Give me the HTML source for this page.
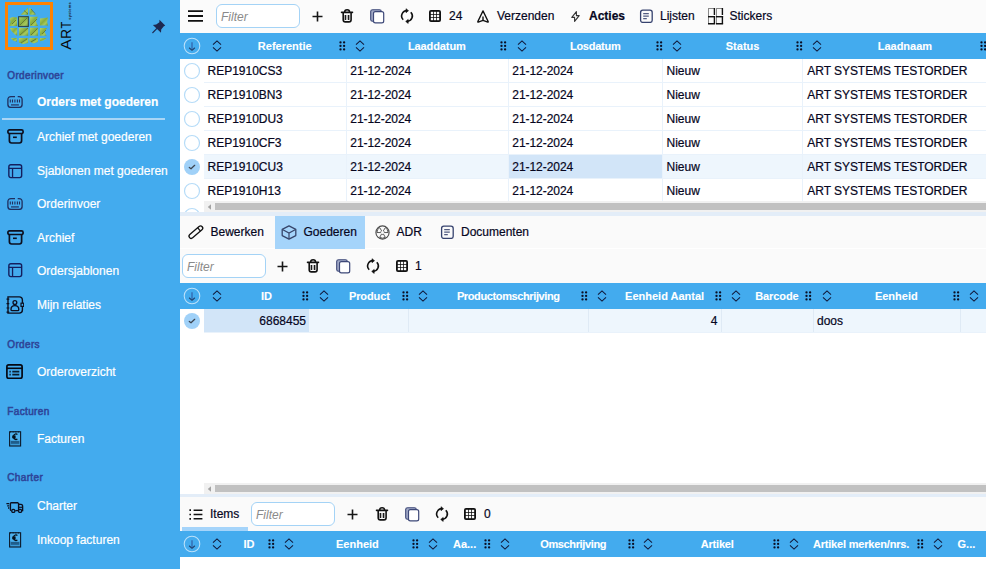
<!DOCTYPE html>
<html><head><meta charset="utf-8"><style>
html,body{margin:0;padding:0;}
body{width:986px;height:569px;overflow:hidden;position:relative;background:#fff;font-family:"Liberation Sans",sans-serif;}
body>div,body>svg{position:absolute;}
div>svg{position:absolute;}
.t{line-height:14px;white-space:nowrap;-webkit-text-stroke:0.2px currentColor;}
</style></head><body>
<div style="left:0;top:0;width:180px;height:569px;background:#43abee"></div>
<div style="left:5px;top:2px;width:48px;height:48px;box-sizing:border-box;border:3px solid #ff8200;"></div>
<svg style="left:0px;top:0px;" width="56" height="52" viewBox="0 0 56 52"><defs><linearGradient id="lg" x1="0" y1="0" x2="1" y2="1"><stop offset="0" stop-color="#b7d56c"/><stop offset="0.45" stop-color="#86ad3f"/><stop offset="0.7" stop-color="#a7c95c"/><stop offset="1" stop-color="#6f9533"/></linearGradient></defs><polygon points="20.6,14.7 28,7.5 28,14.7" fill="url(#lg)"/><polygon points="29.5,7.5 35.8,14.7 29.5,14.7" fill="url(#lg)"/><polygon points="9.6,18.3 12.5,17 17.2,17.6 17.2,26 9.2,26 10.5,22" fill="url(#lg)"/><polygon points="18.1,16.2 28.8,16.2 28.8,26.9 18.1,26.9" fill="url(#lg)"/><polygon points="29.9,16.8 37.9,16.8 36,21.5 37.9,26 29.9,26" fill="url(#lg)"/><polygon points="40,18.6 48,17.6 47.2,22 48,25.6 40,25.6" fill="url(#lg)"/><polygon points="10,28 17.2,28 17.2,35.7 15,34.5 11.5,31" fill="url(#lg)"/><polygon points="18.9,27.7 28.2,27.7 28.2,35.7 18.9,35.7" fill="url(#lg)"/><polygon points="29.9,27.7 37.9,27.7 37.9,35.7 29.9,35.7" fill="url(#lg)"/><polygon points="40,28 47.2,28 44.5,31.5 46.5,35.7 40,35.7" fill="url(#lg)"/><polygon points="10.9,37.9 16.8,37.9 16.8,41.7 13,40.5" fill="url(#lg)"/><polygon points="18.9,37.9 28.2,37.9 28.2,43 23,44.2 18.9,42.5" fill="url(#lg)"/><polygon points="29.5,37.9 37.9,37.9 37.9,42 33.5,43.5 29.5,41.5" fill="url(#lg)"/><polygon points="40,37.9 46.8,37.9 43.5,40.5 40,41.3" fill="url(#lg)"/><path d="M24 10.5L28 14M31 9L35 13.5M20 25L27 18M31 25L37 19M12 24L16 20M20 35L28 28M31 35L37.5 28.5M42 34L46 30M21 43L27 39M31 42L36 39" stroke="#4e6128" stroke-width="0.9" opacity="0.7"/><rect x="18.6" y="16.7" width="9.7" height="9.7" fill="none" stroke="#1d3a5a" stroke-width="1"/></svg>
<svg style="left:56px;top:0px;" width="20" height="54" viewBox="0 0 20 54"><g transform="translate(15,49.8) rotate(-90)" font-family="Liberation Sans" fill="#0a0a0a"><text x="0" y="0" font-size="14" transform="scale(1.12,1)">A</text><text x="10.9" y="0" font-size="14">R</text><text x="0" y="0" font-size="14" transform="translate(21.2,0) scale(0.8,1)">T</text><text x="30" y="-0.2" font-size="4" font-weight="bold" textLength="17.5" lengthAdjust="spacing" fill="#1a1a2a">systems</text></g></svg>
<svg style="left:152px;top:19px;" width="14" height="15" viewBox="0 0 14 15"><path d="M7.4 0.8L13.2 6.6L11.6 7.4L9.2 10.6L9 13.8L0.9 5.9L4.2 5.6L7.4 3.2Z" fill="#1d2850"/><path d="M4.7 9.6L0.8 13.6" stroke="#1d2850" stroke-width="1.3" stroke-linecap="round"/></svg>
<div class="t" style="left:7.3px;top:68.6px;font-size:10px;font-weight:normal;color:#2e4699;letter-spacing:0.35px;-webkit-text-stroke:0.55px currentColor;">Orderinvoer</div>
<div class="t" style="left:7.3px;top:337.6px;font-size:10px;font-weight:normal;color:#2e4699;letter-spacing:0.35px;-webkit-text-stroke:0.55px currentColor;">Orders</div>
<div class="t" style="left:7.3px;top:404.6px;font-size:10px;font-weight:normal;color:#2e4699;letter-spacing:0.35px;-webkit-text-stroke:0.55px currentColor;">Facturen</div>
<div class="t" style="left:7.3px;top:471.4px;font-size:10px;font-weight:normal;color:#2e4699;letter-spacing:0.35px;-webkit-text-stroke:0.55px currentColor;">Charter</div>
<div class="t" style="left:37px;top:94.5px;font-size:12px;font-weight:bold;color:#fff;">Orders met goederen</div>
<svg style="left:7px;top:94.5px;" width="16" height="13" viewBox="0 0 16 13"><path d="M8 1.6H4Q0.9 1.6 0.9 4.6V9.4Q0.9 12.4 4 12.4H12Q15.1 12.4 15.1 9.4V4.6Q15.1 1.6 12 1.6H10.7" fill="none" stroke="#1f2e5e" stroke-width="1.3"/><path d="M3.3 4.4V7.6M5.5 4.4V7.6M7.9 4.4V7.6M10.4 4.4V7.6M12.5 4.4V7.6" stroke="#1f2e5e" stroke-width="1.1"/><path d="M4 9.9H11.9" stroke="#2a4a7e" stroke-width="1.5"/></svg>
<div class="t" style="left:37px;top:130.3px;font-size:12px;font-weight:normal;color:#fff;">Archief met goederen</div>
<svg style="left:6.5px;top:129px;" width="17" height="15" viewBox="0 0 17 15"><rect x="0.9" y="0.9" width="15.2" height="3.6" rx="1.6" fill="none" stroke="#0d1020" stroke-width="1.7"/><path d="M2.4 4.6V11.8Q2.4 14 4.6 14H12.4Q14.6 14 14.6 11.8V4.6" fill="none" stroke="#0d1020" stroke-width="1.7"/><path d="M6 8.3H9.8" stroke="#0d1020" stroke-width="1.6"/></svg>
<div class="t" style="left:37px;top:163.5px;font-size:12px;font-weight:normal;color:#fff;">Sjablonen met goederen</div>
<svg style="left:7.6px;top:163.6px;" width="15" height="15" viewBox="0 0 15 15"><rect x="0.85" y="0.7" width="12.8" height="12.9" rx="2" fill="none" stroke="#141f5e" stroke-width="1.4"/><path d="M0.8 4.3H13.6M4.55 4.3V13.6" stroke="#141f5e" stroke-width="1.3"/></svg>
<div class="t" style="left:37px;top:197.3px;font-size:12px;font-weight:normal;color:#fff;">Orderinvoer</div>
<svg style="left:7px;top:197px;" width="16" height="13" viewBox="0 0 16 13"><path d="M8 1.6H4Q0.9 1.6 0.9 4.6V9.4Q0.9 12.4 4 12.4H12Q15.1 12.4 15.1 9.4V4.6Q15.1 1.6 12 1.6H10.7" fill="none" stroke="#1f2e5e" stroke-width="1.3"/><path d="M3.3 4.4V7.6M5.5 4.4V7.6M7.9 4.4V7.6M10.4 4.4V7.6M12.5 4.4V7.6" stroke="#1f2e5e" stroke-width="1.1"/><path d="M4 9.9H11.9" stroke="#2a4a7e" stroke-width="1.5"/></svg>
<div class="t" style="left:37px;top:230.8px;font-size:12px;font-weight:normal;color:#fff;">Archief</div>
<svg style="left:6.5px;top:230px;" width="17" height="15" viewBox="0 0 17 15"><rect x="0.9" y="0.9" width="15.2" height="3.6" rx="1.6" fill="none" stroke="#0d1020" stroke-width="1.7"/><path d="M2.4 4.6V11.8Q2.4 14 4.6 14H12.4Q14.6 14 14.6 11.8V4.6" fill="none" stroke="#0d1020" stroke-width="1.7"/><path d="M6 8.3H9.8" stroke="#0d1020" stroke-width="1.6"/></svg>
<div class="t" style="left:37px;top:264.3px;font-size:12px;font-weight:normal;color:#fff;">Ordersjablonen</div>
<svg style="left:7.6px;top:263.4px;" width="15" height="15" viewBox="0 0 15 15"><rect x="0.85" y="0.7" width="12.8" height="12.9" rx="2" fill="none" stroke="#141f5e" stroke-width="1.4"/><path d="M0.8 4.3H13.6M4.55 4.3V13.6" stroke="#141f5e" stroke-width="1.3"/></svg>
<div class="t" style="left:37px;top:298px;font-size:12px;font-weight:normal;color:#fff;">Mijn relaties</div>
<svg style="left:6px;top:296px;" width="18" height="18" viewBox="0 0 18 18"><path d="M2 0.9H13.2Q16.4 0.9 16.4 4.1V14Q16.4 17.1 13.2 17.1H2Z" fill="none" stroke="#0b0f20" stroke-width="1.4"/><path d="M0.5 3.2H3.3M0.5 7.6H3.3M0.5 12H3.3M0.5 16.2H3.3" stroke="#0b0f20" stroke-width="1.2"/><circle cx="8.9" cy="6.6" r="1.9" fill="none" stroke="#0b0f20" stroke-width="1.3"/><path d="M5 13.4Q5 9.6 8.9 9.6Q12.8 9.6 12.8 13.4Q12.8 14.6 11.6 14.6H6.2Q5 14.6 5 13.4Z" fill="none" stroke="#0b0f20" stroke-width="1.4"/><rect x="15" y="7.2" width="2.7" height="3.2" fill="#43abee" stroke="#0b0f20" stroke-width="1.2"/></svg>
<div class="t" style="left:37px;top:365.2px;font-size:12px;font-weight:normal;color:#fff;">Orderoverzicht</div>
<svg style="left:6.2px;top:364.2px;" width="17" height="15" viewBox="0 0 17 15"><rect x="0.9" y="0.9" width="15.2" height="13.4" rx="1.8" fill="none" stroke="#050812" stroke-width="1.7"/><path d="M0.9 4.3H16.1" stroke="#050812" stroke-width="1.6"/><path d="M3.4 7.6H4.8M3.4 10.6H4.8M6.3 7.6H13.3M6.3 10.6H13.3" stroke="#0b1e2e" stroke-width="1.7"/></svg>
<div class="t" style="left:37px;top:432px;font-size:12px;font-weight:normal;color:#fff;">Facturen</div>
<svg style="left:8.6px;top:431.2px;" width="13" height="16" viewBox="0 0 13 16"><rect x="0.6" y="0.8" width="11" height="14.2" fill="#3b9ad6" stroke="#0c1a2a" stroke-width="1.1"/><rect x="1.2" y="1.4" width="9.8" height="8" fill="#4cb0ec"/><rect x="1.9" y="10" width="8.4" height="2.8" fill="#1f5d8a"/><path d="M1 0.8H11.2" stroke="#0c1a2a" stroke-width="1.2" stroke-dasharray="1 0.6"/><path d="M8.4 3.4Q7.4 2.6 6.3 3Q4.4 3.8 4.4 5.8Q4.4 7.8 6.3 8.4Q7.4 8.7 8.4 8M3.2 5.2H6.6M3.2 6.5H6.6" fill="none" stroke="#06101a" stroke-width="1.3"/></svg>
<div class="t" style="left:37px;top:498.8px;font-size:12px;font-weight:normal;color:#fff;">Charter</div>
<svg style="left:5.5px;top:501.5px;" width="18" height="11" viewBox="0 0 18 11"><path d="M0.4 1.6H3.2M1.2 3.8H3.2M2 6H3.2" stroke="#0b0f20" stroke-width="1.3"/><path d="M5.4 8.6Q4.4 8.6 4.4 7.6V1.6Q4.4 0.7 5.3 0.7H11.6L12.6 1.5V8.6" fill="none" stroke="#0b0f20" stroke-width="1.4"/><path d="M12.6 2.4H15Q16.6 2.4 16.6 4.4V8.6H15.8" fill="none" stroke="#0b0f20" stroke-width="1.4"/><path d="M9.3 8.6H12.2" stroke="#0b0f20" stroke-width="1.3"/><circle cx="7.3" cy="8.9" r="1.6" fill="#43abee" stroke="#0b0f20" stroke-width="1.3"/><circle cx="14.1" cy="8.9" r="1.6" fill="#43abee" stroke="#0b0f20" stroke-width="1.3"/><path d="M12.6 5.3H16.4" stroke="#0b0f20" stroke-width="1.1"/></svg>
<div class="t" style="left:37px;top:532.8px;font-size:12px;font-weight:normal;color:#fff;">Inkoop facturen</div>
<svg style="left:8.6px;top:532.4px;" width="13" height="16" viewBox="0 0 13 16"><rect x="0.6" y="0.8" width="11" height="14.2" fill="#3b9ad6" stroke="#0c1a2a" stroke-width="1.1"/><rect x="1.2" y="1.4" width="9.8" height="8" fill="#4cb0ec"/><rect x="1.9" y="10" width="8.4" height="2.8" fill="#1f5d8a"/><path d="M1 0.8H11.2" stroke="#0c1a2a" stroke-width="1.2" stroke-dasharray="1 0.6"/><path d="M8.4 3.4Q7.4 2.6 6.3 3Q4.4 3.8 4.4 5.8Q4.4 7.8 6.3 8.4Q7.4 8.7 8.4 8M3.2 5.2H6.6M3.2 6.5H6.6" fill="none" stroke="#06101a" stroke-width="1.3"/></svg>
<div style="left:2px;top:118px;width:163px;height:2px;background:#a9d6f6;"></div>
<div style="left:180px;top:0;width:806px;height:569px;background:#fff"></div>
<div style="left:180px;top:0px;width:806px;height:33px;background:#fbfbfb;"></div>
<svg style="left:188px;top:9.5px;" width="15" height="12" viewBox="0 0 15 12"><path d="M0 1.2H15M0 6H15M0 10.8H15" stroke="#111" stroke-width="1.8"/></svg>
<div style="left:216px;top:4px;width:84px;height:24px;box-sizing:border-box;border:1px solid #a4d3f6;border-radius:6px;background:#fff;"></div>
<div class="t" style="left:221px;top:9.6px;font-size:12px;font-weight:normal;color:#8a8a8a;font-style:italic;-webkit-text-stroke:0">Filter</div>
<svg style="left:311.5px;top:10.5px;" width="11" height="11" viewBox="0 0 11 11"><path d="M5.5 0.5V10.5M0.5 5.5H10.5" stroke="#161616" stroke-width="1.6"/></svg>
<svg style="left:340px;top:8px;" width="14" height="15" viewBox="0 0 14 15"><path d="M1.5 4.35H12.5" stroke="#111" stroke-width="1.6" stroke-linecap="round"/><path d="M4.6 4.3A2.5 2.5 0 0 1 9.6 4.3" fill="none" stroke="#111" stroke-width="1.5"/><path d="M3.2 4.6V11.8Q3.2 13.9 5.3 13.9H9Q11.1 13.9 11.1 11.8V4.6" fill="none" stroke="#111" stroke-width="1.6"/><rect x="5.6" y="7" width="3" height="4.8" fill="#bbb"/><path d="M5.3 6.9V11.9M8.7 6.9V11.9" stroke="#111" stroke-width="1.3"/></svg>
<svg style="left:369.5px;top:8.8px;" width="15" height="15" viewBox="0 0 15 15"><rect x="0.7" y="0.7" width="10.6" height="11.6" rx="1.9" fill="#a3abc8" stroke="#3d4878" stroke-width="1.1"/><rect x="3.5" y="2.6" width="10.2" height="11.2" rx="1.9" fill="#fff" stroke="#3d4878" stroke-width="1.2"/></svg>
<svg style="left:400px;top:8px;" width="15" height="16" viewBox="0 0 15 16"><path d="M7 2.6A5.4 5.4 0 0 0 3.2 11.8" fill="none" stroke="#111" stroke-width="1.6"/><path d="M10.8 4.2A5.4 5.4 0 0 1 7 13.4" fill="none" stroke="#111" stroke-width="1.6"/><path d="M6 0.7L8.5 2.7L6 4.7Z" fill="#111" stroke="#111" stroke-width="0.6" stroke-linejoin="round"/><path d="M8.2 11.4L5.7 13.4L8.2 15.4Z" fill="#111" stroke="#111" stroke-width="0.6" stroke-linejoin="round"/></svg>
<svg style="left:429px;top:10px;" width="12" height="12" viewBox="0 0 12 12"><rect x="0" y="0" width="12" height="12" rx="2" fill="#111"/><rect x="1.80" y="1.80" width="2.3" height="2.3" fill="#fafafa"/><rect x="1.80" y="4.85" width="2.3" height="2.3" fill="#fafafa"/><rect x="1.80" y="7.90" width="2.3" height="2.3" fill="#fafafa"/><rect x="4.85" y="1.80" width="2.3" height="2.3" fill="#fafafa"/><rect x="4.85" y="4.85" width="2.3" height="2.3" fill="#fafafa"/><rect x="4.85" y="7.90" width="2.3" height="2.3" fill="#fafafa"/><rect x="7.90" y="1.80" width="2.3" height="2.3" fill="#fafafa"/><rect x="7.90" y="4.85" width="2.3" height="2.3" fill="#fafafa"/><rect x="7.90" y="7.90" width="2.3" height="2.3" fill="#fafafa"/></svg>
<div class="t" style="left:449px;top:9.4px;font-size:12px;font-weight:normal;color:#06061e;">24</div>
<svg style="left:477px;top:9.5px;" width="12" height="13" viewBox="0 0 12 13"><path d="M6 0.9L11.2 11.6Q11.4 12.2 10.8 12.1L6 10.3L1.2 12.1Q0.6 12.2 0.8 11.6Z" fill="none" stroke="#111" stroke-width="1.3" stroke-linejoin="round"/><path d="M6 6.6V10.4" stroke="#111" stroke-width="1.4"/></svg>
<div class="t" style="left:497px;top:9.4px;font-size:12px;font-weight:normal;color:#06061e;">Verzenden</div>
<svg style="left:570.5px;top:10.5px;" width="9" height="11" viewBox="0 0 9 11"><path d="M5.4 0.6V4.6H8.2L3.6 10.4V6.4H0.8Z" fill="none" stroke="#333" stroke-width="1.1" stroke-linejoin="round"/></svg>
<div class="t" style="left:589px;top:9.3px;font-size:12px;font-weight:bold;color:#06061e;">Acties</div>
<svg style="left:639px;top:9px;" width="14" height="14" viewBox="0 0 14 14"><rect x="1.6" y="1.2" width="11.6" height="12.2" rx="2.2" fill="none" stroke="#36426e" stroke-width="1.3"/><path d="M4.2 4.7H9.8M4.2 7.1H9.8M4.2 9.7H7.8" stroke="#36426e" stroke-width="1.2" opacity="0.85"/></svg>
<div class="t" style="left:660px;top:9.4px;font-size:12px;font-weight:normal;color:#06061e;">Lijsten</div>
<svg style="left:708px;top:8px;" width="16" height="17" viewBox="0 0 16 17"><rect x="0" y="0" width="7" height="1" fill="#8a8a8a"/><rect x="8" y="0" width="7" height="1" fill="#8a8a8a"/><rect x="0" y="0" width="1" height="8" fill="#8a8a8a"/><rect x="8" y="0" width="1" height="8" fill="#8a8a8a"/><rect x="0" y="8" width="1" height="8" fill="#8a8a8a"/><rect x="8" y="8" width="1" height="8" fill="#8a8a8a"/><rect x="5.7" y="0" width="1.4" height="7" fill="#111"/><rect x="13.7" y="0" width="1.4" height="7" fill="#111"/><rect x="5.7" y="8" width="1.4" height="8" fill="#111"/><rect x="13.7" y="8" width="1.4" height="8" fill="#111"/><rect x="0" y="8" width="7.1" height="1.4" fill="#111"/><rect x="8" y="8" width="7.1" height="1.4" fill="#111"/><rect x="0" y="15" width="7.1" height="1.5" fill="#111"/><rect x="8" y="15" width="7.1" height="1.5" fill="#111"/></svg>
<div class="t" style="left:729.5px;top:9.4px;font-size:12px;font-weight:normal;color:#06061e;">Stickers</div>
<div style="left:180px;top:33px;width:806px;height:26px;background:#43abee;"></div>
<svg style="left:183px;top:36.8px;" width="18" height="18" viewBox="0 0 18 18"><circle cx="9" cy="9" r="7.8" fill="none" stroke="#d8eefd" stroke-width="1.05" opacity="0.8"/><path d="M9 5.3V12.6" stroke="#3466ad" stroke-width="1.3"/><path d="M6.4 11L9 13.3L11.6 11" fill="none" stroke="#22406e" stroke-width="1.1" stroke-linecap="round" stroke-linejoin="round"/></svg>
<svg style="left:212.0px;top:40.4px;" width="10" height="12" viewBox="0 0 10 12"><path d="M1 4.7L5 0.9L9 4.7M1 7.3L5 11.1L9 7.3" fill="none" stroke="#10183a" stroke-width="1.05" stroke-linejoin="miter"/></svg>
<svg style="left:355.0px;top:40.4px;" width="10" height="12" viewBox="0 0 10 12"><path d="M1 4.7L5 0.9L9 4.7M1 7.3L5 11.1L9 7.3" fill="none" stroke="#10183a" stroke-width="1.05" stroke-linejoin="miter"/></svg>
<svg style="left:517.1px;top:40.4px;" width="10" height="12" viewBox="0 0 10 12"><path d="M1 4.7L5 0.9L9 4.7M1 7.3L5 11.1L9 7.3" fill="none" stroke="#10183a" stroke-width="1.05" stroke-linejoin="miter"/></svg>
<svg style="left:671.9px;top:40.4px;" width="10" height="12" viewBox="0 0 10 12"><path d="M1 4.7L5 0.9L9 4.7M1 7.3L5 11.1L9 7.3" fill="none" stroke="#10183a" stroke-width="1.05" stroke-linejoin="miter"/></svg>
<svg style="left:811.8px;top:40.4px;" width="10" height="12" viewBox="0 0 10 12"><path d="M1 4.7L5 0.9L9 4.7M1 7.3L5 11.1L9 7.3" fill="none" stroke="#10183a" stroke-width="1.05" stroke-linejoin="miter"/></svg>
<svg style="left:339.1px;top:41px;" width="7" height="10" viewBox="0 0 7 10"><circle cx="1.50" cy="1.40" r="1.15" fill="#0b0f24"/><circle cx="1.50" cy="4.90" r="1.15" fill="#0b0f24"/><circle cx="1.50" cy="8.40" r="1.15" fill="#0b0f24"/><circle cx="5.10" cy="1.40" r="1.15" fill="#0b0f24"/><circle cx="5.10" cy="4.90" r="1.15" fill="#0b0f24"/><circle cx="5.10" cy="8.40" r="1.15" fill="#0b0f24"/></svg>
<svg style="left:500.4px;top:41px;" width="7" height="10" viewBox="0 0 7 10"><circle cx="1.50" cy="1.40" r="1.15" fill="#0b0f24"/><circle cx="1.50" cy="4.90" r="1.15" fill="#0b0f24"/><circle cx="1.50" cy="8.40" r="1.15" fill="#0b0f24"/><circle cx="5.10" cy="1.40" r="1.15" fill="#0b0f24"/><circle cx="5.10" cy="4.90" r="1.15" fill="#0b0f24"/><circle cx="5.10" cy="8.40" r="1.15" fill="#0b0f24"/></svg>
<svg style="left:655.8px;top:41px;" width="7" height="10" viewBox="0 0 7 10"><circle cx="1.50" cy="1.40" r="1.15" fill="#0b0f24"/><circle cx="1.50" cy="4.90" r="1.15" fill="#0b0f24"/><circle cx="1.50" cy="8.40" r="1.15" fill="#0b0f24"/><circle cx="5.10" cy="1.40" r="1.15" fill="#0b0f24"/><circle cx="5.10" cy="4.90" r="1.15" fill="#0b0f24"/><circle cx="5.10" cy="8.40" r="1.15" fill="#0b0f24"/></svg>
<svg style="left:795.6px;top:41px;" width="7" height="10" viewBox="0 0 7 10"><circle cx="1.50" cy="1.40" r="1.15" fill="#0b0f24"/><circle cx="1.50" cy="4.90" r="1.15" fill="#0b0f24"/><circle cx="1.50" cy="8.40" r="1.15" fill="#0b0f24"/><circle cx="5.10" cy="1.40" r="1.15" fill="#0b0f24"/><circle cx="5.10" cy="4.90" r="1.15" fill="#0b0f24"/><circle cx="5.10" cy="8.40" r="1.15" fill="#0b0f24"/></svg>
<svg style="left:980.2px;top:41px;" width="7" height="10" viewBox="0 0 7 10"><circle cx="1.50" cy="1.40" r="1.15" fill="#0b0f24"/><circle cx="1.50" cy="4.90" r="1.15" fill="#0b0f24"/><circle cx="1.50" cy="8.40" r="1.15" fill="#0b0f24"/><circle cx="5.10" cy="1.40" r="1.15" fill="#0b0f24"/><circle cx="5.10" cy="4.90" r="1.15" fill="#0b0f24"/><circle cx="5.10" cy="8.40" r="1.15" fill="#0b0f24"/></svg>
<div class="t" style="left:134.75px;width:300px;text-align:center;top:39px;font-size:11px;font-weight:bold;color:#fff;letter-spacing:0px;-webkit-text-stroke:0.1px currentColor">Referentie</div>
<div class="t" style="left:286.8px;width:300px;text-align:center;top:39px;font-size:11px;font-weight:bold;color:#fff;letter-spacing:-0.1px;-webkit-text-stroke:0.1px currentColor">Laaddatum</div>
<div class="t" style="left:445.20000000000005px;width:300px;text-align:center;top:39px;font-size:11px;font-weight:bold;color:#fff;letter-spacing:-0.25px;-webkit-text-stroke:0.1px currentColor">Losdatum</div>
<div class="t" style="left:592.6px;width:300px;text-align:center;top:39px;font-size:11px;font-weight:bold;color:#fff;letter-spacing:0px;-webkit-text-stroke:0.1px currentColor">Status</div>
<div class="t" style="left:754.9px;width:300px;text-align:center;top:39px;font-size:11px;font-weight:bold;color:#fff;letter-spacing:0px;-webkit-text-stroke:0.1px currentColor">Laadnaam</div>
<div style="left:204px;top:82px;width:782px;height:1px;background:#e9f2fb;"></div>
<svg style="left:183px;top:62px;" width="18" height="18" viewBox="0 0 18 18"><circle cx="9" cy="9" r="7.5" fill="#fff" stroke="#b6dcf8" stroke-width="1.2"/></svg>
<div class="t" style="left:207.5px;top:64px;font-size:12px;font-weight:normal;color:#06061e;">REP1910CS3</div>
<div class="t" style="left:350.3px;top:64px;font-size:12px;font-weight:normal;color:#06061e;letter-spacing:-0.05px">21-12-2024</div>
<div class="t" style="left:512.3px;top:64px;font-size:12px;font-weight:normal;color:#06061e;letter-spacing:-0.05px">21-12-2024</div>
<div class="t" style="left:666.5px;top:64px;font-size:12px;font-weight:normal;color:#06061e;">Nieuw</div>
<div class="t" style="left:807.3px;top:64px;font-size:12px;font-weight:normal;color:#06061e;letter-spacing:-0.05px">ART SYSTEMS TESTORDER</div>
<div style="left:204px;top:106px;width:782px;height:1px;background:#e9f2fb;"></div>
<svg style="left:183px;top:86px;" width="18" height="18" viewBox="0 0 18 18"><circle cx="9" cy="9" r="7.5" fill="#fff" stroke="#b6dcf8" stroke-width="1.2"/></svg>
<div class="t" style="left:207.5px;top:88px;font-size:12px;font-weight:normal;color:#06061e;">REP1910BN3</div>
<div class="t" style="left:350.3px;top:88px;font-size:12px;font-weight:normal;color:#06061e;letter-spacing:-0.05px">21-12-2024</div>
<div class="t" style="left:512.3px;top:88px;font-size:12px;font-weight:normal;color:#06061e;letter-spacing:-0.05px">21-12-2024</div>
<div class="t" style="left:666.5px;top:88px;font-size:12px;font-weight:normal;color:#06061e;">Nieuw</div>
<div class="t" style="left:807.3px;top:88px;font-size:12px;font-weight:normal;color:#06061e;letter-spacing:-0.05px">ART SYSTEMS TESTORDER</div>
<div style="left:204px;top:130px;width:782px;height:1px;background:#e9f2fb;"></div>
<svg style="left:183px;top:110px;" width="18" height="18" viewBox="0 0 18 18"><circle cx="9" cy="9" r="7.5" fill="#fff" stroke="#b6dcf8" stroke-width="1.2"/></svg>
<div class="t" style="left:207.5px;top:112px;font-size:12px;font-weight:normal;color:#06061e;">REP1910DU3</div>
<div class="t" style="left:350.3px;top:112px;font-size:12px;font-weight:normal;color:#06061e;letter-spacing:-0.05px">21-12-2024</div>
<div class="t" style="left:512.3px;top:112px;font-size:12px;font-weight:normal;color:#06061e;letter-spacing:-0.05px">21-12-2024</div>
<div class="t" style="left:666.5px;top:112px;font-size:12px;font-weight:normal;color:#06061e;">Nieuw</div>
<div class="t" style="left:807.3px;top:112px;font-size:12px;font-weight:normal;color:#06061e;letter-spacing:-0.05px">ART SYSTEMS TESTORDER</div>
<div style="left:204px;top:154px;width:782px;height:1px;background:#e9f2fb;"></div>
<svg style="left:183px;top:134px;" width="18" height="18" viewBox="0 0 18 18"><circle cx="9" cy="9" r="7.5" fill="#fff" stroke="#b6dcf8" stroke-width="1.2"/></svg>
<div class="t" style="left:207.5px;top:136px;font-size:12px;font-weight:normal;color:#06061e;">REP1910CF3</div>
<div class="t" style="left:350.3px;top:136px;font-size:12px;font-weight:normal;color:#06061e;letter-spacing:-0.05px">21-12-2024</div>
<div class="t" style="left:512.3px;top:136px;font-size:12px;font-weight:normal;color:#06061e;letter-spacing:-0.05px">21-12-2024</div>
<div class="t" style="left:666.5px;top:136px;font-size:12px;font-weight:normal;color:#06061e;">Nieuw</div>
<div class="t" style="left:807.3px;top:136px;font-size:12px;font-weight:normal;color:#06061e;letter-spacing:-0.05px">ART SYSTEMS TESTORDER</div>
<div style="left:204px;top:155px;width:782px;height:23px;background:#eef6fd;"></div>
<div style="left:508px;top:155px;width:154px;height:23px;background:#d2e5f8;"></div>
<div style="left:204px;top:178px;width:782px;height:1px;background:#e9f2fb;"></div>
<svg style="left:183px;top:158px;" width="18" height="18" viewBox="0 0 18 18"><circle cx="9" cy="9" r="8" fill="#a0d1f8"/><path d="M6.3 9.5L8 10.8L11.7 7.3" fill="none" stroke="#3c4450" stroke-width="1.25" stroke-linecap="round" stroke-linejoin="round"/></svg>
<div class="t" style="left:207.5px;top:160px;font-size:12px;font-weight:normal;color:#06061e;">REP1910CU3</div>
<div class="t" style="left:350.3px;top:160px;font-size:12px;font-weight:normal;color:#06061e;letter-spacing:-0.05px">21-12-2024</div>
<div class="t" style="left:512.3px;top:160px;font-size:12px;font-weight:normal;color:#06061e;letter-spacing:-0.05px">21-12-2024</div>
<div class="t" style="left:666.5px;top:160px;font-size:12px;font-weight:normal;color:#06061e;">Nieuw</div>
<div class="t" style="left:807.3px;top:160px;font-size:12px;font-weight:normal;color:#06061e;letter-spacing:-0.05px">ART SYSTEMS TESTORDER</div>
<div style="left:204px;top:202px;width:782px;height:1px;background:#e9f2fb;"></div>
<svg style="left:183px;top:182px;" width="18" height="18" viewBox="0 0 18 18"><circle cx="9" cy="9" r="7.5" fill="#fff" stroke="#b6dcf8" stroke-width="1.2"/></svg>
<div class="t" style="left:207.5px;top:184px;font-size:12px;font-weight:normal;color:#06061e;">REP1910H13</div>
<div class="t" style="left:350.3px;top:184px;font-size:12px;font-weight:normal;color:#06061e;letter-spacing:-0.05px">21-12-2024</div>
<div class="t" style="left:512.3px;top:184px;font-size:12px;font-weight:normal;color:#06061e;letter-spacing:-0.05px">21-12-2024</div>
<div class="t" style="left:666.5px;top:184px;font-size:12px;font-weight:normal;color:#06061e;">Nieuw</div>
<div class="t" style="left:807.3px;top:184px;font-size:12px;font-weight:normal;color:#06061e;letter-spacing:-0.05px">ART SYSTEMS TESTORDER</div>
<div style="left:346px;top:59px;width:1px;height:143px;background:#e9f2fb;"></div>
<div style="left:508px;top:59px;width:1px;height:143px;background:#e9f2fb;"></div>
<div style="left:662px;top:59px;width:1px;height:143px;background:#e9f2fb;"></div>
<div style="left:802px;top:59px;width:1px;height:143px;background:#e9f2fb;"></div>
<div style="left:180px;top:203px;width:24px;height:9px;overflow:hidden"><svg style="left:3px;top:4px" width="18" height="18" viewBox="0 0 18 18"><circle cx="9" cy="9" r="7.5" fill="#fff" stroke="#b6dcf8" stroke-width="1.2"/></svg></div>
<div style="left:204px;top:201px;width:782px;height:11px;background:#f1f1f1;"></div>
<svg style="left:207px;top:204px;" width="5" height="6" viewBox="0 0 5 6"><path d="M4 0.2L0.8 3L4 5.8Z" fill="#a3a3a3"/></svg>
<div style="left:215px;top:203px;width:771px;height:7px;background:#c1c1c1;"></div>
<div style="left:180px;top:212px;width:806px;height:4px;background:#e3edf8;"></div>
<div style="left:180px;top:216px;width:806px;height:32px;background:#fafafa;"></div>
<div style="left:275px;top:216px;width:90px;height:32.6px;background:#a5d4fa;"></div>
<svg style="left:186px;top:222px;" width="20" height="20" viewBox="0 0 20 20"><g transform="translate(9.9,10.15) rotate(-40.8)"><path d="M-8.3 0Q-8.3 -2.2 -6.2 -2.2H6.1A2.2 2.2 0 0 1 6.1 2.2H-6.2Q-8.3 2.2 -8.3 0Z" fill="none" stroke="#111" stroke-width="1.3" stroke-linejoin="round"/><path d="M4.2 -2.2V2.2" stroke="#111" stroke-width="1.2"/></g></svg>
<div class="t" style="left:210.5px;top:225.3px;font-size:12px;font-weight:normal;color:#06061e;">Bewerken</div>
<svg style="left:281px;top:225px;" width="16" height="15" viewBox="0 0 16 15"><path d="M8 0.9L14.8 4.4V10.6L8 14.1L1.2 10.6V4.4Z" fill="none" stroke="#37456a" stroke-width="1.3" stroke-linejoin="round"/><path d="M1.4 4.5L8 8L14.6 4.5M8 8V14" fill="none" stroke="#37456a" stroke-width="1.2"/></svg>
<div class="t" style="left:303.5px;top:225.3px;font-size:12px;font-weight:normal;color:#06061e;">Goederen</div>
<svg style="left:374.7px;top:225px;" width="15" height="15" viewBox="0 0 15 15"><circle cx="7.5" cy="7.5" r="6.6" fill="none" stroke="#4a4a4a" stroke-width="1.1"/><path d="M8.51 9.11L10.30 12.35A5.6 5.6 0 0 1 4.70 12.35L6.49 9.11A1.9 1.9 0 0 0 8.51 9.11Z" fill="none" stroke="#4a4a4a" stroke-width="0.9" stroke-linejoin="round"/><path d="M5.60 7.57L1.90 7.50A5.6 5.6 0 0 1 4.70 2.65L6.61 5.82A1.9 1.9 0 0 0 5.60 7.57Z" fill="none" stroke="#4a4a4a" stroke-width="0.9" stroke-linejoin="round"/><path d="M8.39 5.82L10.30 2.65A5.6 5.6 0 0 1 13.10 7.50L9.40 7.57A1.9 1.9 0 0 0 8.39 5.82Z" fill="none" stroke="#4a4a4a" stroke-width="0.9" stroke-linejoin="round"/></svg>
<div class="t" style="left:396.5px;top:225.3px;font-size:12px;font-weight:normal;color:#06061e;">ADR</div>
<svg style="left:440px;top:225.3px;" width="14" height="14" viewBox="0 0 14 14"><rect x="1.6" y="1.2" width="11.6" height="12.2" rx="2.2" fill="none" stroke="#36426e" stroke-width="1.3"/><path d="M4.2 4.7H9.8M4.2 7.1H9.8M4.2 9.7H7.8" stroke="#36426e" stroke-width="1.2" opacity="0.85"/></svg>
<div class="t" style="left:461px;top:225.3px;font-size:12px;font-weight:normal;color:#06061e;">Documenten</div>
<div style="left:180px;top:248.6px;width:806px;height:34.4px;background:#fafafa;"></div>
<div style="left:182px;top:254px;width:84px;height:24px;box-sizing:border-box;border:1px solid #a4d3f6;border-radius:6px;background:#fff;"></div>
<div class="t" style="left:187px;top:259.6px;font-size:12px;font-weight:normal;color:#8a8a8a;font-style:italic;-webkit-text-stroke:0">Filter</div>
<svg style="left:277px;top:260.5px;" width="11" height="11" viewBox="0 0 11 11"><path d="M5.5 0.5V10.5M0.5 5.5H10.5" stroke="#161616" stroke-width="1.6"/></svg>
<svg style="left:306px;top:258px;" width="14" height="15" viewBox="0 0 14 15"><path d="M1.5 4.35H12.5" stroke="#111" stroke-width="1.6" stroke-linecap="round"/><path d="M4.6 4.3A2.5 2.5 0 0 1 9.6 4.3" fill="none" stroke="#111" stroke-width="1.5"/><path d="M3.2 4.6V11.8Q3.2 13.9 5.3 13.9H9Q11.1 13.9 11.1 11.8V4.6" fill="none" stroke="#111" stroke-width="1.6"/><rect x="5.6" y="7" width="3" height="4.8" fill="#bbb"/><path d="M5.3 6.9V11.9M8.7 6.9V11.9" stroke="#111" stroke-width="1.3"/></svg>
<svg style="left:335.5px;top:258.8px;" width="15" height="15" viewBox="0 0 15 15"><rect x="0.7" y="0.7" width="10.6" height="11.6" rx="1.9" fill="#a3abc8" stroke="#3d4878" stroke-width="1.1"/><rect x="3.5" y="2.6" width="10.2" height="11.2" rx="1.9" fill="#fff" stroke="#3d4878" stroke-width="1.2"/></svg>
<svg style="left:365.5px;top:258px;" width="15" height="16" viewBox="0 0 15 16"><path d="M7 2.6A5.4 5.4 0 0 0 3.2 11.8" fill="none" stroke="#111" stroke-width="1.6"/><path d="M10.8 4.2A5.4 5.4 0 0 1 7 13.4" fill="none" stroke="#111" stroke-width="1.6"/><path d="M6 0.7L8.5 2.7L6 4.7Z" fill="#111" stroke="#111" stroke-width="0.6" stroke-linejoin="round"/><path d="M8.2 11.4L5.7 13.4L8.2 15.4Z" fill="#111" stroke="#111" stroke-width="0.6" stroke-linejoin="round"/></svg>
<svg style="left:395.5px;top:260px;" width="12" height="12" viewBox="0 0 12 12"><rect x="0" y="0" width="12" height="12" rx="2" fill="#111"/><rect x="1.80" y="1.80" width="2.3" height="2.3" fill="#fafafa"/><rect x="1.80" y="4.85" width="2.3" height="2.3" fill="#fafafa"/><rect x="1.80" y="7.90" width="2.3" height="2.3" fill="#fafafa"/><rect x="4.85" y="1.80" width="2.3" height="2.3" fill="#fafafa"/><rect x="4.85" y="4.85" width="2.3" height="2.3" fill="#fafafa"/><rect x="4.85" y="7.90" width="2.3" height="2.3" fill="#fafafa"/><rect x="7.90" y="1.80" width="2.3" height="2.3" fill="#fafafa"/><rect x="7.90" y="4.85" width="2.3" height="2.3" fill="#fafafa"/><rect x="7.90" y="7.90" width="2.3" height="2.3" fill="#fafafa"/></svg>
<div class="t" style="left:415px;top:259.4px;font-size:12px;font-weight:normal;color:#06061e;">1</div>
<div style="left:180px;top:283px;width:806px;height:26px;background:#43abee;"></div>
<svg style="left:183px;top:286.8px;" width="18" height="18" viewBox="0 0 18 18"><circle cx="9" cy="9" r="7.8" fill="none" stroke="#d8eefd" stroke-width="1.05" opacity="0.8"/><path d="M9 5.3V12.6" stroke="#3466ad" stroke-width="1.3"/><path d="M6.4 11L9 13.3L11.6 11" fill="none" stroke="#22406e" stroke-width="1.1" stroke-linecap="round" stroke-linejoin="round"/></svg>
<svg style="left:211.9px;top:290.4px;" width="10" height="12" viewBox="0 0 10 12"><path d="M1 4.7L5 0.9L9 4.7M1 7.3L5 11.1L9 7.3" fill="none" stroke="#10183a" stroke-width="1.05" stroke-linejoin="miter"/></svg>
<svg style="left:318.7px;top:290.4px;" width="10" height="12" viewBox="0 0 10 12"><path d="M1 4.7L5 0.9L9 4.7M1 7.3L5 11.1L9 7.3" fill="none" stroke="#10183a" stroke-width="1.05" stroke-linejoin="miter"/></svg>
<svg style="left:418.2px;top:290.4px;" width="10" height="12" viewBox="0 0 10 12"><path d="M1 4.7L5 0.9L9 4.7M1 7.3L5 11.1L9 7.3" fill="none" stroke="#10183a" stroke-width="1.05" stroke-linejoin="miter"/></svg>
<svg style="left:597.0px;top:290.4px;" width="10" height="12" viewBox="0 0 10 12"><path d="M1 4.7L5 0.9L9 4.7M1 7.3L5 11.1L9 7.3" fill="none" stroke="#10183a" stroke-width="1.05" stroke-linejoin="miter"/></svg>
<svg style="left:730.5px;top:290.4px;" width="10" height="12" viewBox="0 0 10 12"><path d="M1 4.7L5 0.9L9 4.7M1 7.3L5 11.1L9 7.3" fill="none" stroke="#10183a" stroke-width="1.05" stroke-linejoin="miter"/></svg>
<svg style="left:822.3px;top:290.4px;" width="10" height="12" viewBox="0 0 10 12"><path d="M1 4.7L5 0.9L9 4.7M1 7.3L5 11.1L9 7.3" fill="none" stroke="#10183a" stroke-width="1.05" stroke-linejoin="miter"/></svg>
<svg style="left:969.2px;top:290.4px;" width="10" height="12" viewBox="0 0 10 12"><path d="M1 4.7L5 0.9L9 4.7M1 7.3L5 11.1L9 7.3" fill="none" stroke="#10183a" stroke-width="1.05" stroke-linejoin="miter"/></svg>
<svg style="left:302.4px;top:291px;" width="7" height="10" viewBox="0 0 7 10"><circle cx="1.50" cy="1.40" r="1.15" fill="#0b0f24"/><circle cx="1.50" cy="4.90" r="1.15" fill="#0b0f24"/><circle cx="1.50" cy="8.40" r="1.15" fill="#0b0f24"/><circle cx="5.10" cy="1.40" r="1.15" fill="#0b0f24"/><circle cx="5.10" cy="4.90" r="1.15" fill="#0b0f24"/><circle cx="5.10" cy="8.40" r="1.15" fill="#0b0f24"/></svg>
<svg style="left:402.2px;top:291px;" width="7" height="10" viewBox="0 0 7 10"><circle cx="1.50" cy="1.40" r="1.15" fill="#0b0f24"/><circle cx="1.50" cy="4.90" r="1.15" fill="#0b0f24"/><circle cx="1.50" cy="8.40" r="1.15" fill="#0b0f24"/><circle cx="5.10" cy="1.40" r="1.15" fill="#0b0f24"/><circle cx="5.10" cy="4.90" r="1.15" fill="#0b0f24"/><circle cx="5.10" cy="8.40" r="1.15" fill="#0b0f24"/></svg>
<svg style="left:581.2px;top:291px;" width="7" height="10" viewBox="0 0 7 10"><circle cx="1.50" cy="1.40" r="1.15" fill="#0b0f24"/><circle cx="1.50" cy="4.90" r="1.15" fill="#0b0f24"/><circle cx="1.50" cy="8.40" r="1.15" fill="#0b0f24"/><circle cx="5.10" cy="1.40" r="1.15" fill="#0b0f24"/><circle cx="5.10" cy="4.90" r="1.15" fill="#0b0f24"/><circle cx="5.10" cy="8.40" r="1.15" fill="#0b0f24"/></svg>
<svg style="left:714.6px;top:291px;" width="7" height="10" viewBox="0 0 7 10"><circle cx="1.50" cy="1.40" r="1.15" fill="#0b0f24"/><circle cx="1.50" cy="4.90" r="1.15" fill="#0b0f24"/><circle cx="1.50" cy="8.40" r="1.15" fill="#0b0f24"/><circle cx="5.10" cy="1.40" r="1.15" fill="#0b0f24"/><circle cx="5.10" cy="4.90" r="1.15" fill="#0b0f24"/><circle cx="5.10" cy="8.40" r="1.15" fill="#0b0f24"/></svg>
<svg style="left:805.2px;top:291px;" width="7" height="10" viewBox="0 0 7 10"><circle cx="1.50" cy="1.40" r="1.15" fill="#0b0f24"/><circle cx="1.50" cy="4.90" r="1.15" fill="#0b0f24"/><circle cx="1.50" cy="8.40" r="1.15" fill="#0b0f24"/><circle cx="5.10" cy="1.40" r="1.15" fill="#0b0f24"/><circle cx="5.10" cy="4.90" r="1.15" fill="#0b0f24"/><circle cx="5.10" cy="8.40" r="1.15" fill="#0b0f24"/></svg>
<svg style="left:953.4px;top:291px;" width="7" height="10" viewBox="0 0 7 10"><circle cx="1.50" cy="1.40" r="1.15" fill="#0b0f24"/><circle cx="1.50" cy="4.90" r="1.15" fill="#0b0f24"/><circle cx="1.50" cy="8.40" r="1.15" fill="#0b0f24"/><circle cx="5.10" cy="1.40" r="1.15" fill="#0b0f24"/><circle cx="5.10" cy="4.90" r="1.15" fill="#0b0f24"/><circle cx="5.10" cy="8.40" r="1.15" fill="#0b0f24"/></svg>
<div class="t" style="left:116.39999999999998px;width:300px;text-align:center;top:289px;font-size:11px;font-weight:bold;color:#fff;letter-spacing:0px;-webkit-text-stroke:0.1px currentColor">ID</div>
<div class="t" style="left:219.39999999999998px;width:300px;text-align:center;top:289px;font-size:11px;font-weight:bold;color:#fff;letter-spacing:-0.1px;-webkit-text-stroke:0.1px currentColor">Product</div>
<div class="t" style="left:358.3px;width:300px;text-align:center;top:289px;font-size:11px;font-weight:bold;color:#fff;letter-spacing:-0.38px;-webkit-text-stroke:0.1px currentColor">Productomschrijving</div>
<div class="t" style="left:514.6px;width:300px;text-align:center;top:289px;font-size:11px;font-weight:bold;color:#fff;letter-spacing:0px;-webkit-text-stroke:0.1px currentColor">Eenheid Aantal</div>
<div class="t" style="left:626.9px;width:300px;text-align:center;top:289px;font-size:11px;font-weight:bold;color:#fff;letter-spacing:-0.1px;-webkit-text-stroke:0.1px currentColor">Barcode</div>
<div class="t" style="left:746.3px;width:300px;text-align:center;top:289px;font-size:11px;font-weight:bold;color:#fff;letter-spacing:0px;-webkit-text-stroke:0.1px currentColor">Eenheid</div>
<div style="left:204px;top:309px;width:782px;height:23px;background:#eef6fd;"></div>
<div style="left:204px;top:309px;width:105px;height:23px;background:#d2e5f8;"></div>
<div style="left:204px;top:332px;width:782px;height:1px;background:#e9f2fb;"></div>
<div style="left:408px;top:309px;width:1px;height:23px;background:#dfeaf5;"></div>
<div style="left:588px;top:309px;width:1px;height:23px;background:#dfeaf5;"></div>
<div style="left:721px;top:309px;width:1px;height:23px;background:#dfeaf5;"></div>
<div style="left:813px;top:309px;width:1px;height:23px;background:#dfeaf5;"></div>
<div style="left:960px;top:309px;width:1px;height:23px;background:#dfeaf5;"></div>
<svg style="left:183px;top:312.4px;" width="18" height="18" viewBox="0 0 18 18"><circle cx="9" cy="9" r="8" fill="#a0d1f8"/><path d="M6.3 9.5L8 10.8L11.7 7.3" fill="none" stroke="#3c4450" stroke-width="1.25" stroke-linecap="round" stroke-linejoin="round"/></svg>
<div class="t" style="left:6px;width:300px;text-align:right;top:314px;font-size:12px;font-weight:normal;color:#06061e;">6868455</div>
<div class="t" style="left:417.5px;width:300px;text-align:right;top:314px;font-size:12px;font-weight:normal;color:#06061e;">4</div>
<div class="t" style="left:817px;top:314px;font-size:12px;font-weight:normal;color:#06061e;">doos</div>
<div style="left:204px;top:483px;width:782px;height:11px;background:#f1f1f1;"></div>
<svg style="left:207px;top:486px;" width="5" height="6" viewBox="0 0 5 6"><path d="M4 0.2L0.8 3L4 5.8Z" fill="#a3a3a3"/></svg>
<div style="left:215px;top:485px;width:771px;height:7px;background:#c1c1c1;"></div>
<div style="left:180px;top:494px;width:806px;height:3px;background:#e3edf8;"></div>
<div style="left:180px;top:497px;width:806px;height:34px;background:#fafafa;"></div>
<svg style="left:189px;top:508.5px;" width="14" height="11" viewBox="0 0 14 11"><path d="M4.6 1.2H13.4M4.6 5.5H13.4M4.6 9.8H13.4" stroke="#111" stroke-width="1.5"/><path d="M0.4 1.2H2M0.4 5.5H2M0.4 9.8H2" stroke="#111" stroke-width="1.7"/></svg>
<div class="t" style="left:210px;top:506.7px;font-size:12px;font-weight:normal;color:#06061e;">Items</div>
<div style="left:182px;top:527px;width:66px;height:4px;background:#a5d4fa;"></div>
<div style="left:251px;top:502px;width:84px;height:24px;box-sizing:border-box;border:1px solid #a4d3f6;border-radius:6px;background:#fff;"></div>
<div class="t" style="left:256px;top:507.6px;font-size:12px;font-weight:normal;color:#8a8a8a;font-style:italic;-webkit-text-stroke:0">Filter</div>
<svg style="left:346.5px;top:508.5px;" width="11" height="11" viewBox="0 0 11 11"><path d="M5.5 0.5V10.5M0.5 5.5H10.5" stroke="#161616" stroke-width="1.6"/></svg>
<svg style="left:375px;top:506px;" width="14" height="15" viewBox="0 0 14 15"><path d="M1.5 4.35H12.5" stroke="#111" stroke-width="1.6" stroke-linecap="round"/><path d="M4.6 4.3A2.5 2.5 0 0 1 9.6 4.3" fill="none" stroke="#111" stroke-width="1.5"/><path d="M3.2 4.6V11.8Q3.2 13.9 5.3 13.9H9Q11.1 13.9 11.1 11.8V4.6" fill="none" stroke="#111" stroke-width="1.6"/><rect x="5.6" y="7" width="3" height="4.8" fill="#bbb"/><path d="M5.3 6.9V11.9M8.7 6.9V11.9" stroke="#111" stroke-width="1.3"/></svg>
<svg style="left:404.5px;top:506.8px;" width="15" height="15" viewBox="0 0 15 15"><rect x="0.7" y="0.7" width="10.6" height="11.6" rx="1.9" fill="#a3abc8" stroke="#3d4878" stroke-width="1.1"/><rect x="3.5" y="2.6" width="10.2" height="11.2" rx="1.9" fill="#fff" stroke="#3d4878" stroke-width="1.2"/></svg>
<svg style="left:435px;top:506px;" width="15" height="16" viewBox="0 0 15 16"><path d="M7 2.6A5.4 5.4 0 0 0 3.2 11.8" fill="none" stroke="#111" stroke-width="1.6"/><path d="M10.8 4.2A5.4 5.4 0 0 1 7 13.4" fill="none" stroke="#111" stroke-width="1.6"/><path d="M6 0.7L8.5 2.7L6 4.7Z" fill="#111" stroke="#111" stroke-width="0.6" stroke-linejoin="round"/><path d="M8.2 11.4L5.7 13.4L8.2 15.4Z" fill="#111" stroke="#111" stroke-width="0.6" stroke-linejoin="round"/></svg>
<svg style="left:464px;top:508px;" width="12" height="12" viewBox="0 0 12 12"><rect x="0" y="0" width="12" height="12" rx="2" fill="#111"/><rect x="1.80" y="1.80" width="2.3" height="2.3" fill="#fafafa"/><rect x="1.80" y="4.85" width="2.3" height="2.3" fill="#fafafa"/><rect x="1.80" y="7.90" width="2.3" height="2.3" fill="#fafafa"/><rect x="4.85" y="1.80" width="2.3" height="2.3" fill="#fafafa"/><rect x="4.85" y="4.85" width="2.3" height="2.3" fill="#fafafa"/><rect x="4.85" y="7.90" width="2.3" height="2.3" fill="#fafafa"/><rect x="7.90" y="1.80" width="2.3" height="2.3" fill="#fafafa"/><rect x="7.90" y="4.85" width="2.3" height="2.3" fill="#fafafa"/><rect x="7.90" y="7.90" width="2.3" height="2.3" fill="#fafafa"/></svg>
<div class="t" style="left:484px;top:507.4px;font-size:12px;font-weight:normal;color:#06061e;">0</div>
<div style="left:180px;top:531px;width:806px;height:26px;background:#43abee;"></div>
<svg style="left:183px;top:534.8px;" width="18" height="18" viewBox="0 0 18 18"><circle cx="9" cy="9" r="7.8" fill="none" stroke="#d8eefd" stroke-width="1.05" opacity="0.8"/><path d="M9 5.3V12.6" stroke="#3466ad" stroke-width="1.3"/><path d="M6.4 11L9 13.3L11.6 11" fill="none" stroke="#22406e" stroke-width="1.1" stroke-linecap="round" stroke-linejoin="round"/></svg>
<svg style="left:211.7px;top:538.4px;" width="10" height="12" viewBox="0 0 10 12"><path d="M1 4.7L5 0.9L9 4.7M1 7.3L5 11.1L9 7.3" fill="none" stroke="#10183a" stroke-width="1.05" stroke-linejoin="miter"/></svg>
<svg style="left:283.7px;top:538.4px;" width="10" height="12" viewBox="0 0 10 12"><path d="M1 4.7L5 0.9L9 4.7M1 7.3L5 11.1L9 7.3" fill="none" stroke="#10183a" stroke-width="1.05" stroke-linejoin="miter"/></svg>
<svg style="left:428.0px;top:538.4px;" width="10" height="12" viewBox="0 0 10 12"><path d="M1 4.7L5 0.9L9 4.7M1 7.3L5 11.1L9 7.3" fill="none" stroke="#10183a" stroke-width="1.05" stroke-linejoin="miter"/></svg>
<svg style="left:500.2px;top:538.4px;" width="10" height="12" viewBox="0 0 10 12"><path d="M1 4.7L5 0.9L9 4.7M1 7.3L5 11.1L9 7.3" fill="none" stroke="#10183a" stroke-width="1.05" stroke-linejoin="miter"/></svg>
<svg style="left:643.4px;top:538.4px;" width="10" height="12" viewBox="0 0 10 12"><path d="M1 4.7L5 0.9L9 4.7M1 7.3L5 11.1L9 7.3" fill="none" stroke="#10183a" stroke-width="1.05" stroke-linejoin="miter"/></svg>
<svg style="left:788.5px;top:538.4px;" width="10" height="12" viewBox="0 0 10 12"><path d="M1 4.7L5 0.9L9 4.7M1 7.3L5 11.1L9 7.3" fill="none" stroke="#10183a" stroke-width="1.05" stroke-linejoin="miter"/></svg>
<svg style="left:932.5px;top:538.4px;" width="10" height="12" viewBox="0 0 10 12"><path d="M1 4.7L5 0.9L9 4.7M1 7.3L5 11.1L9 7.3" fill="none" stroke="#10183a" stroke-width="1.05" stroke-linejoin="miter"/></svg>
<svg style="left:268.3px;top:539px;" width="7" height="10" viewBox="0 0 7 10"><circle cx="1.50" cy="1.40" r="1.15" fill="#0b0f24"/><circle cx="1.50" cy="4.90" r="1.15" fill="#0b0f24"/><circle cx="1.50" cy="8.40" r="1.15" fill="#0b0f24"/><circle cx="5.10" cy="1.40" r="1.15" fill="#0b0f24"/><circle cx="5.10" cy="4.90" r="1.15" fill="#0b0f24"/><circle cx="5.10" cy="8.40" r="1.15" fill="#0b0f24"/></svg>
<svg style="left:412px;top:539px;" width="7" height="10" viewBox="0 0 7 10"><circle cx="1.50" cy="1.40" r="1.15" fill="#0b0f24"/><circle cx="1.50" cy="4.90" r="1.15" fill="#0b0f24"/><circle cx="1.50" cy="8.40" r="1.15" fill="#0b0f24"/><circle cx="5.10" cy="1.40" r="1.15" fill="#0b0f24"/><circle cx="5.10" cy="4.90" r="1.15" fill="#0b0f24"/><circle cx="5.10" cy="8.40" r="1.15" fill="#0b0f24"/></svg>
<svg style="left:484.4px;top:539px;" width="7" height="10" viewBox="0 0 7 10"><circle cx="1.50" cy="1.40" r="1.15" fill="#0b0f24"/><circle cx="1.50" cy="4.90" r="1.15" fill="#0b0f24"/><circle cx="1.50" cy="8.40" r="1.15" fill="#0b0f24"/><circle cx="5.10" cy="1.40" r="1.15" fill="#0b0f24"/><circle cx="5.10" cy="4.90" r="1.15" fill="#0b0f24"/><circle cx="5.10" cy="8.40" r="1.15" fill="#0b0f24"/></svg>
<svg style="left:628.1px;top:539px;" width="7" height="10" viewBox="0 0 7 10"><circle cx="1.50" cy="1.40" r="1.15" fill="#0b0f24"/><circle cx="1.50" cy="4.90" r="1.15" fill="#0b0f24"/><circle cx="1.50" cy="8.40" r="1.15" fill="#0b0f24"/><circle cx="5.10" cy="1.40" r="1.15" fill="#0b0f24"/><circle cx="5.10" cy="4.90" r="1.15" fill="#0b0f24"/><circle cx="5.10" cy="8.40" r="1.15" fill="#0b0f24"/></svg>
<svg style="left:772.6px;top:539px;" width="7" height="10" viewBox="0 0 7 10"><circle cx="1.50" cy="1.40" r="1.15" fill="#0b0f24"/><circle cx="1.50" cy="4.90" r="1.15" fill="#0b0f24"/><circle cx="1.50" cy="8.40" r="1.15" fill="#0b0f24"/><circle cx="5.10" cy="1.40" r="1.15" fill="#0b0f24"/><circle cx="5.10" cy="4.90" r="1.15" fill="#0b0f24"/><circle cx="5.10" cy="8.40" r="1.15" fill="#0b0f24"/></svg>
<svg style="left:916.5px;top:539px;" width="7" height="10" viewBox="0 0 7 10"><circle cx="1.50" cy="1.40" r="1.15" fill="#0b0f24"/><circle cx="1.50" cy="4.90" r="1.15" fill="#0b0f24"/><circle cx="1.50" cy="8.40" r="1.15" fill="#0b0f24"/><circle cx="5.10" cy="1.40" r="1.15" fill="#0b0f24"/><circle cx="5.10" cy="4.90" r="1.15" fill="#0b0f24"/><circle cx="5.10" cy="8.40" r="1.15" fill="#0b0f24"/></svg>
<div class="t" style="left:98.9px;width:300px;text-align:center;top:537px;font-size:11px;font-weight:bold;color:#fff;letter-spacing:0px;-webkit-text-stroke:0.1px currentColor">ID</div>
<div class="t" style="left:207.39999999999998px;width:300px;text-align:center;top:537px;font-size:11px;font-weight:bold;color:#fff;letter-spacing:0px;-webkit-text-stroke:0.1px currentColor">Eenheid</div>
<div class="t" style="left:314.6px;width:300px;text-align:center;top:537px;font-size:11px;font-weight:bold;color:#fff;letter-spacing:0px;-webkit-text-stroke:0.1px currentColor">Aa...</div>
<div class="t" style="left:423.20000000000005px;width:300px;text-align:center;top:537px;font-size:11px;font-weight:bold;color:#fff;letter-spacing:-0.36px;-webkit-text-stroke:0.1px currentColor">Omschrijving</div>
<div class="t" style="left:567.2px;width:300px;text-align:center;top:537px;font-size:11px;font-weight:bold;color:#fff;letter-spacing:-0.2px;-webkit-text-stroke:0.1px currentColor">Artikel</div>
<div class="t" style="left:711px;width:300px;text-align:center;top:537px;font-size:11px;font-weight:bold;color:#fff;letter-spacing:-0.18px;-webkit-text-stroke:0.1px currentColor">Artikel merken/nrs.</div>
<div class="t" style="left:816.4px;width:300px;text-align:center;top:537px;font-size:11px;font-weight:bold;color:#fff;letter-spacing:0px;-webkit-text-stroke:0.1px currentColor">G...</div>
</body></html>
